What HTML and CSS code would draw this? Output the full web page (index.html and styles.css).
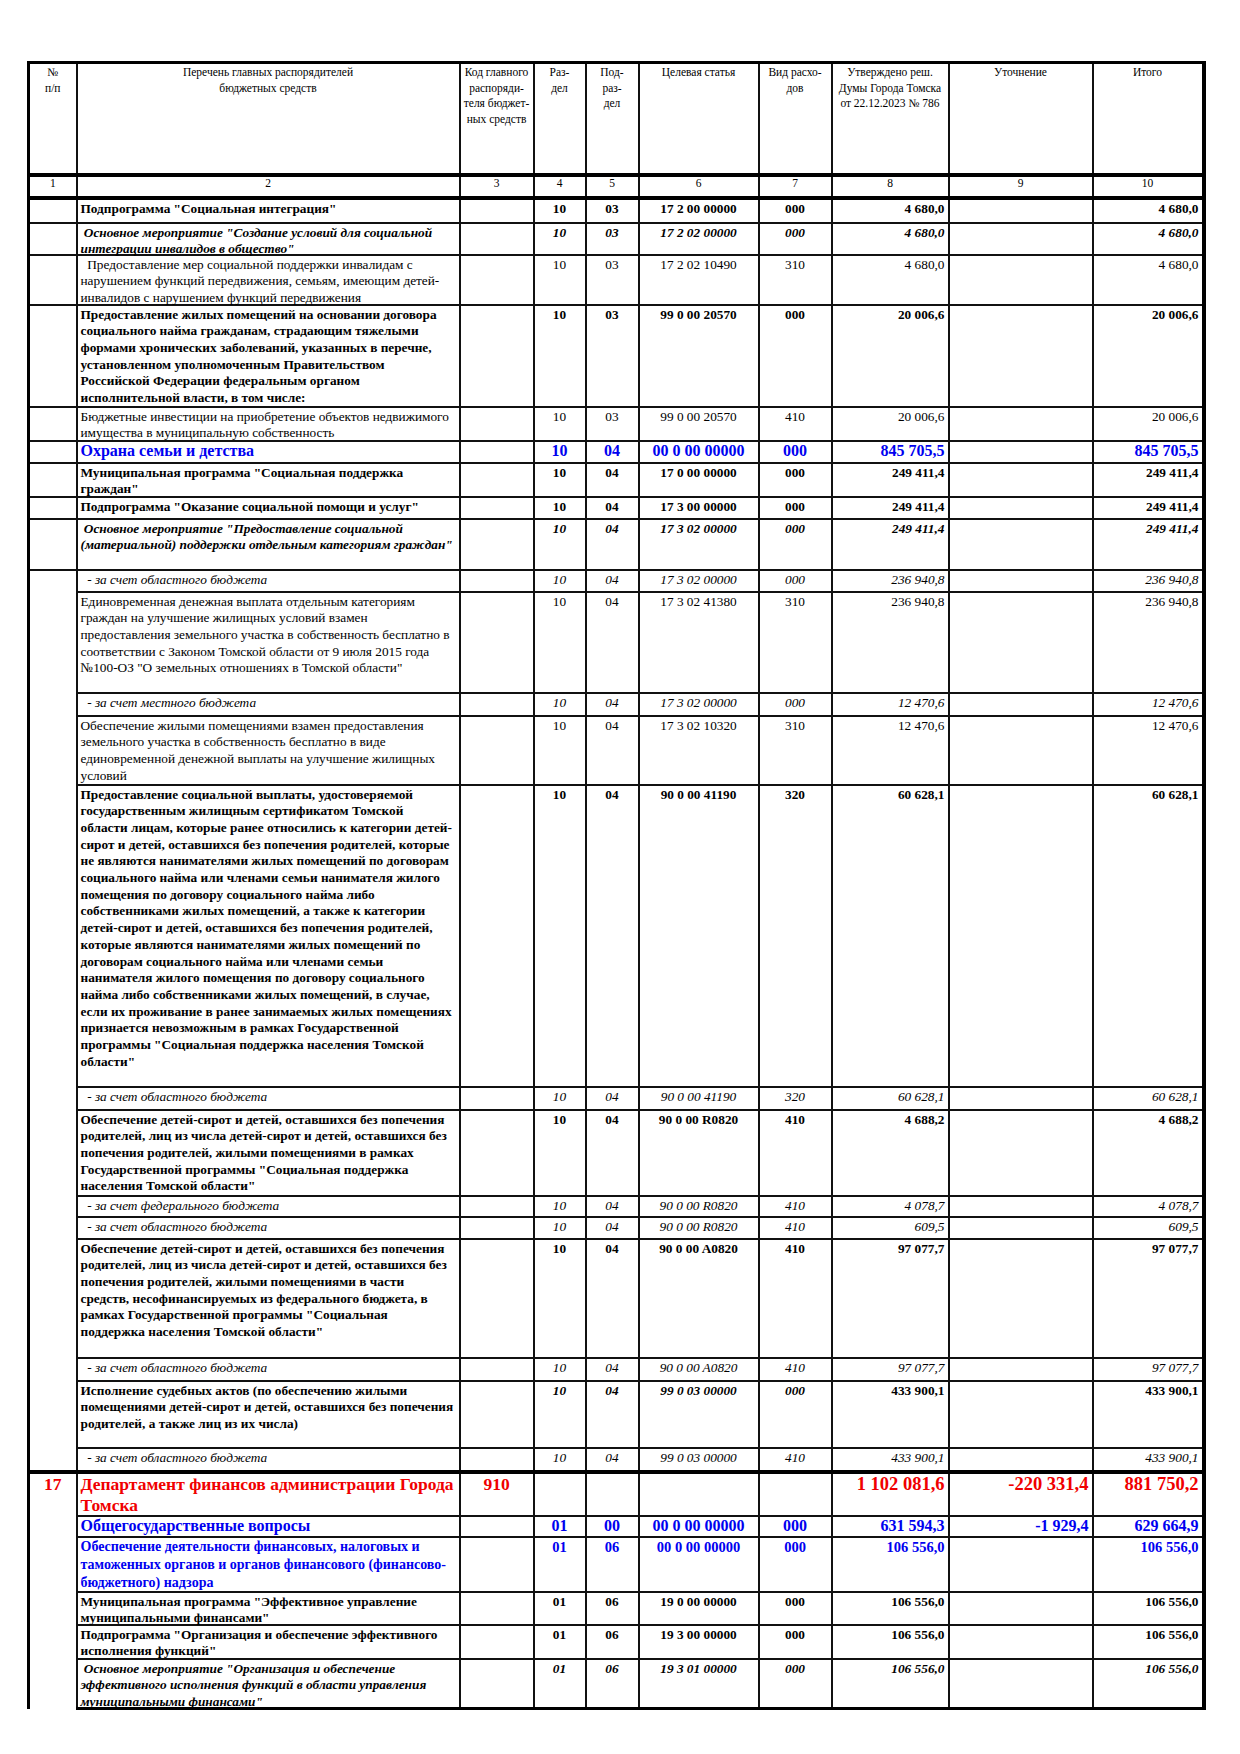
FILE: index.html
```html
<!DOCTYPE html>
<html lang="ru">
<head>
    <meta charset="UTF-8">
    <title>Ведомственная структура расходов</title>
    <link rel="stylesheet" href="styles.css">
</head>
<body>
    <table class="budget">
        <colgroup>
            <col class="w1"><col class="w2"><col class="w3"><col class="w4"><col class="w5">
            <col class="w6"><col class="w7"><col class="w8"><col class="w9"><col class="w10">
        </colgroup>
        <thead>
            <tr class="head">
                <th>№<br>п/п</th>
                <th>Перечень главных распорядителей<br>бюджетных средств</th>
                <th>Код главного распоряди-теля бюджет-ных средств</th>
                <th>Раз-<br>дел</th>
                <th>Под-<br>раз-<br>дел</th>
                <th>Целевая статья</th>
                <th>Вид расхо-<br>дов</th>
                <th>Утверждено реш.<br>Думы Города Томска<br>от 22.12.2023 № 786</th>
                <th>Уточнение</th>
                <th>Итого</th>
            </tr>
            <tr class="nums">
                <th>1</th><th>2</th><th>3</th><th>4</th><th>5</th>
                <th>6</th><th>7</th><th>8</th><th>9</th><th>10</th>
            </tr>
        </thead>
        <tbody>
            <tr class="b h25">
                <td></td>
                <td class="txt">Подпрограмма "Социальная интеграция"</td>
                <td></td><td>10</td><td>03</td><td>17 2 00 00000</td><td>000</td>
                <td class="sum">4 680,0</td><td></td><td class="sum">4 680,0</td>
            </tr>
            <tr class="bi h32">
                <td></td>
                <td class="txt"><div class="fit">&nbsp;Основное мероприятие "Создание условий для социальной<br>интеграции инвалидов в общество"</div></td>
                <td></td><td>10</td><td>03</td><td>17 2 02 00000</td><td>000</td>
                <td class="sum">4 680,0</td><td></td><td class="sum">4 680,0</td>
            </tr>
            <tr class="h50">
                <td></td>
                <td class="txt"><div class="fit">&nbsp;&nbsp;Предоставление мер социальной поддержки инвалидам с<br>нарушением функций передвижения, семьям, имеющим детей-<br>инвалидов с нарушением функций передвижения</div></td>
                <td></td><td>10</td><td>03</td><td>17 2 02 10490</td><td>310</td>
                <td class="sum">4 680,0</td><td></td><td class="sum">4 680,0</td>
            </tr>
            <tr class="b h102">
                <td></td>
                <td class="txt"><div class="fit">Предоставление жилых помещений на основании договора<br>социального найма гражданам, страдающим тяжелыми<br>формами хронических заболеваний, указанных в перечне,<br>установленном уполномоченным Правительством<br>Российской Федерации федеральным органом<br>исполнительной власти, в том числе:</div></td>
                <td></td><td>10</td><td>03</td><td>99 0 00 20570</td><td>000</td>
                <td class="sum">20 006,6</td><td></td><td class="sum">20 006,6</td>
            </tr>
            <tr class="h34">
                <td></td>
                <td class="txt"><div class="fit">Бюджетные инвестиции на приобретение объектов недвижимого<br>имущества в муниципальную собственность</div></td>
                <td></td><td>10</td><td>03</td><td>99 0 00 20570</td><td>410</td>
                <td class="sum">20 006,6</td><td></td><td class="sum">20 006,6</td>
            </tr>
            <tr class="section h22">
                <td></td>
                <td class="txt">Охрана семьи и детства</td>
                <td></td><td>10</td><td>04</td><td>00 0 00 00000</td><td>000</td>
                <td class="sum">845 705,5</td><td></td><td class="sum">845 705,5</td>
            </tr>
            <tr class="b h34">
                <td></td>
                <td class="txt"><div class="fit">Муниципальная программа "Социальная поддержка<br>граждан"</div></td>
                <td></td><td>10</td><td>04</td><td>17 0 00 00000</td><td>000</td>
                <td class="sum">249 411,4</td><td></td><td class="sum">249 411,4</td>
            </tr>
            <tr class="b h22">
                <td></td>
                <td class="txt">Подпрограмма "Оказание социальной помощи и услуг"</td>
                <td></td><td>10</td><td>04</td><td>17 3 00 00000</td><td>000</td>
                <td class="sum">249 411,4</td><td></td><td class="sum">249 411,4</td>
            </tr>
            <tr class="bi h51">
                <td></td>
                <td class="txt"><div class="fit">&nbsp;Основное мероприятие "Предоставление социальной<br>(материальной) поддержки отдельным категориям граждан"</div></td>
                <td></td><td>10</td><td>04</td><td>17 3 02 00000</td><td>000</td>
                <td class="sum">249 411,4</td><td></td><td class="sum">249 411,4</td>
            </tr>
            <tr class="i h22">
                <td rowspan="13"></td>
                <td class="txt">&nbsp;&nbsp;- за счет областного бюджета</td>
                <td></td><td>10</td><td>04</td><td>17 3 02 00000</td><td>000</td>
                <td class="sum">236 940,8</td><td></td><td class="sum">236 940,8</td>
            </tr>
            <tr class="h101">
                <td class="txt"><div class="fit">Единовременная денежная выплата отдельным категориям<br>граждан на улучшение жилищных условий взамен<br>предоставления земельного участка в собственность бесплатно в<br>соответствии с Законом Томской области от 9 июля 2015 года<br>№100-ОЗ "О земельных отношениях в Томской области"</div></td>
                <td></td><td>10</td><td>04</td><td>17 3 02 41380</td><td>310</td>
                <td class="sum">236 940,8</td><td></td><td class="sum">236 940,8</td>
            </tr>
            <tr class="i h23">
                <td class="txt">&nbsp;&nbsp;- за счет местного бюджета</td>
                <td></td><td>10</td><td>04</td><td>17 3 02 00000</td><td>000</td>
                <td class="sum">12 470,6</td><td></td><td class="sum">12 470,6</td>
            </tr>
            <tr class="h69">
                <td class="txt"><div class="fit">Обеспечение жилыми помещениями взамен предоставления<br>земельного участка в собственность бесплатно в виде<br>единовременной денежной выплаты на улучшение жилищных<br>условий</div></td>
                <td></td><td>10</td><td>04</td><td>17 3 02 10320</td><td>310</td>
                <td class="sum">12 470,6</td><td></td><td class="sum">12 470,6</td>
            </tr>
            <tr class="b h302">
                <td class="txt"><div class="fit">Предоставление социальной выплаты, удостоверяемой<br>государственным жилищным сертификатом Томской<br>области лицам, которые ранее относились к категории детей-<br>сирот и детей, оставшихся без попечения родителей, которые<br>не являются нанимателями жилых помещений по договорам<br>социального найма или членами семьи нанимателя жилого<br>помещения по договору социального найма либо<br>собственниками жилых помещений, а также к категории<br>детей-сирот и детей, оставшихся без попечения родителей,<br>которые являются нанимателями жилых помещений по<br>договорам социального найма или членами семьи<br>нанимателя жилого помещения по договору социального<br>найма либо собственниками жилых помещений, в случае,<br>если их проживание в ранее занимаемых жилых помещениях<br>признается невозможным в рамках Государственной<br>программы "Социальная поддержка населения Томской<br>области"</div></td>
                <td></td><td>10</td><td>04</td><td>90 0 00 41190</td><td>320</td>
                <td class="sum">60 628,1</td><td></td><td class="sum">60 628,1</td>
            </tr>
            <tr class="i h23">
                <td class="txt">&nbsp;&nbsp;- за счет областного бюджета</td>
                <td></td><td>10</td><td>04</td><td>90 0 00 41190</td><td>320</td>
                <td class="sum n">60 628,1</td><td></td><td class="sum n">60 628,1</td>
            </tr>
            <tr class="b h86">
                <td class="txt"><div class="fit">Обеспечение детей-сирот и детей, оставшихся без попечения<br>родителей, лиц из числа детей-сирот и детей, оставшихся без<br>попечения родителей, жилыми помещениями в рамках<br>Государственной программы "Социальная поддержка<br>населения Томской области"</div></td>
                <td></td><td>10</td><td>04</td><td>90 0 00 R0820</td><td>410</td>
                <td class="sum">4 688,2</td><td></td><td class="sum n">4 688,2</td>
            </tr>
            <tr class="i h21">
                <td class="txt">&nbsp;&nbsp;- за счет федерального бюджета</td>
                <td></td><td>10</td><td>04</td><td>90 0 00 R0820</td><td>410</td>
                <td class="sum">4 078,7</td><td></td><td class="sum n">4 078,7</td>
            </tr>
            <tr class="i h22">
                <td class="txt">&nbsp;&nbsp;- за счет областного бюджета</td>
                <td></td><td>10</td><td>04</td><td>90 0 00 R0820</td><td>410</td>
                <td class="sum">609,5</td><td></td><td class="sum n">609,5</td>
            </tr>
            <tr class="b h119">
                <td class="txt"><div class="fit">Обеспечение детей-сирот и детей, оставшихся без попечения<br>родителей, лиц из числа детей-сирот и детей, оставшихся без<br>попечения родителей, жилыми помещениями в части<br>средств, несофинансируемых из федерального бюджета, в<br>рамках Государственной программы "Социальная<br>поддержка населения Томской области"</div></td>
                <td></td><td>10</td><td>04</td><td>90 0 00 A0820</td><td>410</td>
                <td class="sum">97 077,7</td><td></td><td class="sum">97 077,7</td>
            </tr>
            <tr class="i h23">
                <td class="txt">&nbsp;&nbsp;- за счет областного бюджета</td>
                <td></td><td>10</td><td>04</td><td>90 0 00 A0820</td><td>410</td>
                <td class="sum n">97 077,7</td><td></td><td class="sum n">97 077,7</td>
            </tr>
            <tr class="b h67">
                <td class="txt"><div class="fit">Исполнение судебных актов (по обеспечению жилыми<br>помещениями детей-сирот и детей, оставшихся без попечения<br>родителей, а также лиц из их числа)</div></td>
                <td></td><td class="bi">10</td><td class="bi">04</td><td class="bi">99 0 03 00000</td><td class="bi">000</td>
                <td class="sum">433 900,1</td><td></td><td class="sum">433 900,1</td>
            </tr>
            <tr class="i h24">
                <td class="txt">&nbsp;&nbsp;- за счет областного бюджета</td>
                <td></td><td>10</td><td>04</td><td>99 0 03 00000</td><td>410</td>
                <td class="sum n">433 900,1</td><td></td><td class="sum n">433 900,1</td>
            </tr>
            <tr class="dept h44">
                <td class="num" rowspan="6">17</td>
                <td class="txt"><div class="fit">Департамент финансов администрации Города<br>Томска</div></td>
                <td>910</td><td></td><td></td><td></td><td></td>
                <td class="sum">1 102 081,6</td><td class="sum">-220 331,4</td><td class="sum">881 750,2</td>
            </tr>
            <tr class="section h21">
                <td class="txt">Общегосударственные вопросы</td>
                <td></td><td>01</td><td>00</td><td>00 0 00 00000</td><td>000</td>
                <td class="sum">631 594,3</td><td class="sum">-1 929,4</td><td class="sum">629 664,9</td>
            </tr>
            <tr class="section sub h55">
                <td class="txt"><div class="fit">Обеспечение деятельности финансовых, налоговых и<br>таможенных органов и органов финансового (финансово-<br>бюджетного) надзора</div></td>
                <td></td><td>01</td><td>06</td><td>00 0 00 00000</td><td>000</td>
                <td class="sum">106 556,0</td><td></td><td class="sum">106 556,0</td>
            </tr>
            <tr class="b h33">
                <td class="txt"><div class="fit">Муниципальная программа "Эффективное управление<br>муниципальными финансами"</div></td>
                <td></td><td>01</td><td>06</td><td>19 0 00 00000</td><td>000</td>
                <td class="sum">106 556,0</td><td></td><td class="sum">106 556,0</td>
            </tr>
            <tr class="b h34">
                <td class="txt"><div class="fit">Подпрограмма "Организация и обеспечение эффективного<br>исполнения функций"</div></td>
                <td></td><td>01</td><td>06</td><td>19 3 00 00000</td><td>000</td>
                <td class="sum">106 556,0</td><td></td><td class="sum">106 556,0</td>
            </tr>
            <tr class="bi h50 last">
                <td class="txt"><div class="fit">&nbsp;Основное мероприятие "Организация и обеспечение<br>эффективного исполнения функций в области управления<br>муниципальными финансами"</div></td>
                <td></td><td>01</td><td>06</td><td>19 3 01 00000</td><td>000</td>
                <td class="sum">106 556,0</td><td></td><td class="sum">106 556,0</td>
            </tr>
        </tbody>
    </table>
</body>
</html>
```

FILE: styles.css
```css
* {
    box-sizing: border-box;
}

body {
    margin: 0;
    padding: 61px 0 0 27px;
    background: #fff;
    color: #000;
    font-family: "Liberation Serif", "Times New Roman", serif;
}

.budget {
    width: 1175px;
    table-layout: fixed;
    border-collapse: collapse;
    border-left: 3px solid #000;
    border-right: 4px solid #000;
    border-top: 3px solid #000;
}

.w1 { width: 48px; }
.w2 { width: 383px; }
.w3 { width: 74px; }
.w4 { width: 52px; }
.w5 { width: 53px; }
.w6 { width: 120px; }
.w7 { width: 73px; }
.w8 { width: 117px; }
.w9 { width: 144px; }
.w10 { width: 111px; }

th,
td {
    border: 2px solid #111;
    vertical-align: top;
    text-align: center;
    padding: 1px 2px 0;
}

/* header */
.head th {
    height: 112px;
    font-size: 11.5px;
    line-height: 15.5px;
    font-weight: normal;
    border-bottom: 4px solid #000;
}

.nums th {
    height: 23px;
    font-size: 11.5px;
    line-height: 13px;
    font-weight: normal;
    padding-top: 0;
    border-bottom: 4px solid #000;
}

/* body rows */
td {
    font-size: 13.3px;
    line-height: 16.7px;
}

td.txt {
    text-align: left;
    padding-left: 3px;
    padding-right: 0;
    white-space: nowrap;
}

/* wrapped text may run into the row line, as in the printed form */
.fit {
    margin-bottom: -12px;
}

td.sum {
    text-align: right;
    padding-right: 3px;
}

tr.b td { font-weight: bold; }
tr.i td { font-style: italic; }
tr.bi td { font-weight: bold; font-style: italic; }
td.bi { font-style: italic; }
td.n { font-weight: normal; font-style: normal; }

tr.section td {
    color: #0000f0;
    font-weight: bold;
    font-size: 16px;
    line-height: 18px;
    padding-top: 0;
}

tr.section.sub td {
    font-size: 14.5px;
    line-height: 18px;
}

tr.section.sub td.txt { font-size: 14px; }

tr.dept td {
    color: #f00000;
    font-weight: bold;
    font-size: 17.5px;
    line-height: 21px;
    padding-top: 0;
    border-top: 4px solid #000;
}

tr.dept td.sum { font-size: 18.5px; }

td.num {
    border-bottom: none;
}

tr.last td {
    border-bottom: 3px solid #000;
}

.h21 td { height: 21px; }
.h22 td { height: 22px; }
.h23 td { height: 23px; }
.h24 td { height: 24px; }
.h25 td { height: 25px; }
.h32 td { height: 32px; }
.h33 td { height: 33px; }
.h34 td { height: 34px; }
.h44 td { height: 44px; }
.h50 td { height: 50px; }
.h51 td { height: 51px; }
.h55 td { height: 55px; }
.h67 td { height: 67px; }
.h69 td { height: 69px; }
.h86 td { height: 86px; }
.h101 td { height: 101px; }
.h102 td { height: 102px; }
.h119 td { height: 119px; }
.h302 td { height: 302px; }
```
